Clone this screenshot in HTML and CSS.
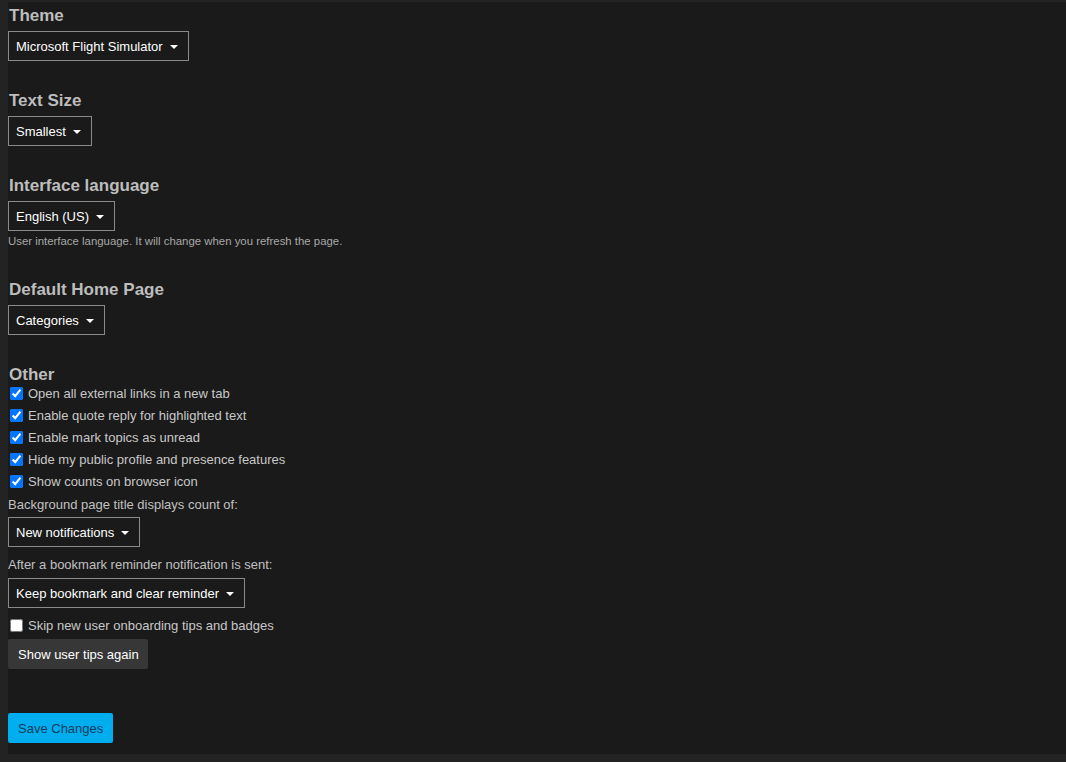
FILE: index.html
```html
<!DOCTYPE html>
<html>
<head>
  <title>Interface Preferences</title>
  <link rel="stylesheet" href="styles.css">
</head>
<body>
  <div class="panel">
    <form class="prefs">
      <div class="pref">
        <h2>Theme</h2>
        <div class="select"><span>Microsoft Flight Simulator</span><i class="caret"></i></div>
      </div>

      <div class="pref">
        <h2>Text Size</h2>
        <div class="select"><span>Smallest</span><i class="caret"></i></div>
      </div>

      <div class="pref">
        <h2>Interface language</h2>
        <div class="select"><span>English (US)</span><i class="caret"></i></div>
        <div class="desc">User interface language. It will change when you refresh the page.</div>
      </div>

      <div class="pref">
        <h2>Default Home Page</h2>
        <div class="select"><span>Categories</span><i class="caret"></i></div>
      </div>

      <div class="pref other">
        <h2>Other</h2>
        <label class="check-row"><input type="checkbox" checked> Open all external links in a new tab</label>
        <label class="check-row"><input type="checkbox" checked> Enable quote reply for highlighted text</label>
        <label class="check-row"><input type="checkbox" checked> Enable mark topics as unread</label>
        <label class="check-row"><input type="checkbox" checked> Hide my public profile and presence features</label>
        <label class="check-row"><input type="checkbox" checked> Show counts on browser icon</label>

        <div class="field-label">Background page title displays count of:</div>
        <div class="select"><span>New notifications</span><i class="caret"></i></div>

        <div class="field-label second">After a bookmark reminder notification is sent:</div>
        <div class="select"><span>Keep bookmark and clear reminder</span><i class="caret"></i></div>

        <label class="check-row skip"><input type="checkbox"> Skip new user onboarding tips and badges</label>
        <button type="button" class="btn">Show user tips again</button>
      </div>

      <button type="button" class="btn btn-primary">Save Changes</button>
    </form>
  </div>
</body>
</html>
```

FILE: styles.css
```css
html, body {
  margin: 0;
  height: 100%;
}

body {
  font-family: "Liberation Sans", Arial, sans-serif;
  font-size: 13px;
  background-color: #232323;
  padding-top: 2px;
  box-sizing: border-box;
}

.panel {
  margin-left: 8px;
  height: 752px;
  background-color: #1a1a1a;
  padding-top: 3px;
  box-sizing: border-box;
}

.prefs {
  display: flex;
  flex-direction: column;
  align-items: flex-start;
}

.pref {
  display: flex;
  flex-direction: column;
  align-items: flex-start;
  margin-bottom: 29px;
}

.pref h2 {
  margin: 0 0 5px 1px;
  font-size: 17px;
  line-height: 21px;
  font-weight: bold;
  color: #bdbdbd;
}

.select {
  display: flex;
  align-items: center;
  height: 30px;
  box-sizing: border-box;
  padding: 0 10px 0 7px;
  border: 1px solid #8a8a8a;
  color: #fff;
  font-size: 13px;
}

.caret {
  width: 0;
  height: 0;
  margin-left: 7px;
  margin-top: 1px;
  border-left: 4px solid transparent;
  border-right: 4px solid transparent;
  border-top: 4px solid #fff;
}

.desc {
  margin-top: 4px;
  margin-bottom: 2px;
  font-size: 11.4px;
  line-height: 13px;
  color: #a8a8a8;
}

.other {
  margin-bottom: 44px;
}

.other h2 {
  margin-bottom: -3px;
}

.check-row {
  display: flex;
  align-items: center;
  height: 22px;
  color: #c8c8c8;
  font-size: 13px;
}

.check-row input {
  width: 13px;
  height: 13px;
  margin: 0 5px 0 2px;
}

.field-label {
  line-height: 22px;
  color: #c0c0c0;
  margin-top: 2px;
  margin-bottom: 1px;
}

.field-label.second {
  margin-top: 7px;
  margin-bottom: 2px;
}

.skip {
  margin-top: 6px;
}

.btn {
  height: 30px;
  padding: 0 9px 0 10px;
  border: none;
  border-radius: 2px;
  background-color: #373737;
  color: #fff;
  font-family: "Liberation Sans", Arial, sans-serif;
  font-size: 13px;
  margin-top: 3px;
  cursor: pointer;
}

.btn-primary {
  margin-top: 0;
  padding: 0 10px;
  background-color: #00aeef;
  color: #123d5c;
}
```
